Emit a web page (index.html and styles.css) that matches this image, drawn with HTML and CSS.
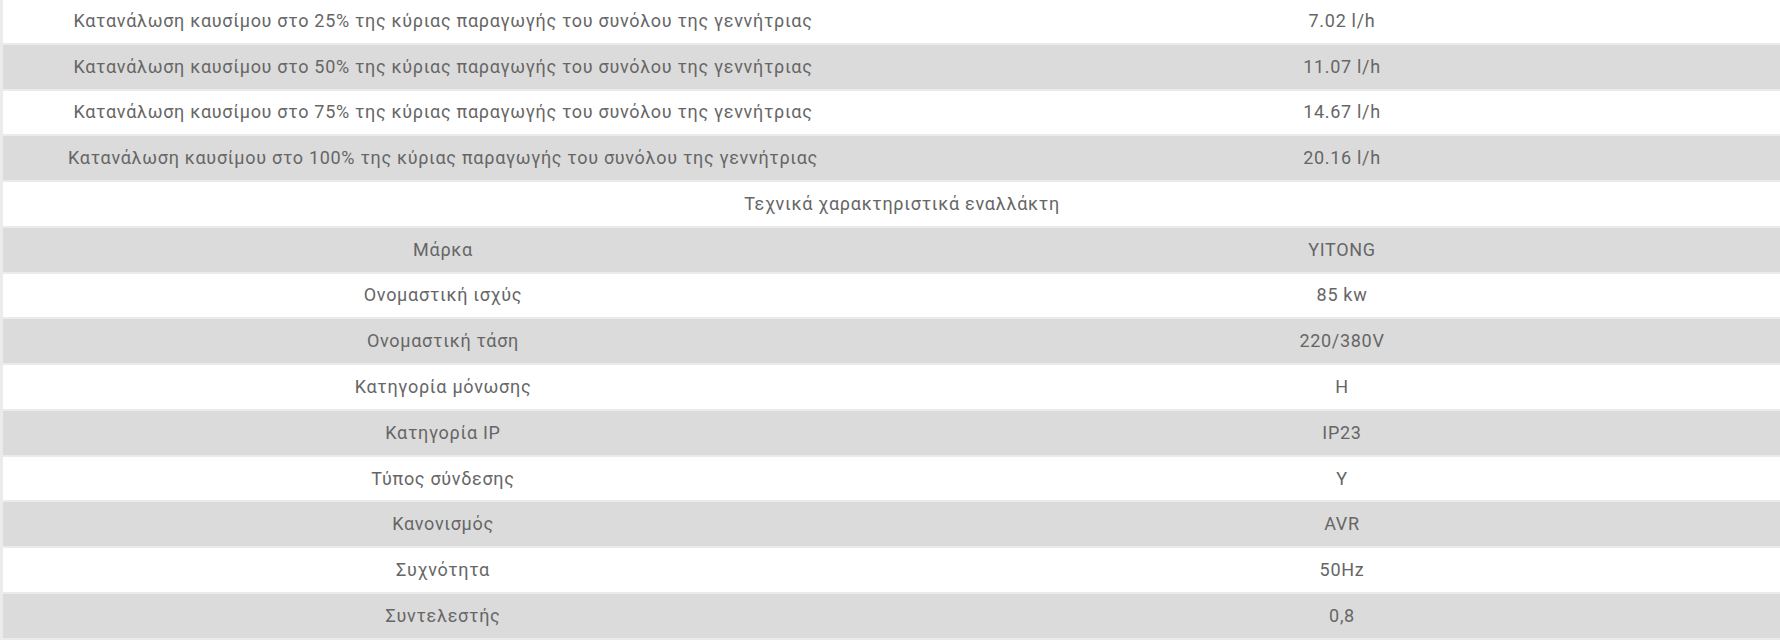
FILE: index.html
```html
<!DOCTYPE html>
<html lang="el">
<head>
<meta charset="utf-8">
<link rel="stylesheet" href="styles.css">
</head>
<body>
<div class="wrap">
  <div class="specs">
    <div class="row"><div class="cell">Κατανάλωση καυσίμου στο 25% της κύριας παραγωγής του συνόλου της γεννήτριας</div><div class="cell">7.02 l/h</div></div>
    <div class="row alt"><div class="cell">Κατανάλωση καυσίμου στο 50% της κύριας παραγωγής του συνόλου της γεννήτριας</div><div class="cell">11.07 l/h</div></div>
    <div class="row"><div class="cell">Κατανάλωση καυσίμου στο 75% της κύριας παραγωγής του συνόλου της γεννήτριας</div><div class="cell">14.67 l/h</div></div>
    <div class="row alt"><div class="cell">Κατανάλωση καυσίμου στο 100% της κύριας παραγωγής του συνόλου της γεννήτριας</div><div class="cell">20.16 l/h</div></div>
    <div class="row head"><div class="cell span">Τεχνικά χαρακτηριστικά εναλλάκτη</div></div>
    <div class="row alt"><div class="cell">Μάρκα</div><div class="cell">YITONG</div></div>
    <div class="row"><div class="cell">Ονομαστική ισχύς</div><div class="cell">85 kw</div></div>
    <div class="row alt"><div class="cell">Ονομαστική τάση</div><div class="cell">220/380V</div></div>
    <div class="row"><div class="cell">Κατηγορία μόνωσης</div><div class="cell">H</div></div>
    <div class="row alt"><div class="cell">Κατηγορία IP</div><div class="cell">IP23</div></div>
    <div class="row"><div class="cell">Τύπος σύνδεσης</div><div class="cell">Y</div></div>
    <div class="row alt"><div class="cell">Κανονισμός</div><div class="cell">AVR</div></div>
    <div class="row"><div class="cell">Συχνότητα</div><div class="cell">50Hz</div></div>
    <div class="row alt"><div class="cell">Συντελεστής</div><div class="cell">0,8</div></div>
  </div>
</div>
</body>
</html>
```

FILE: styles.css
```css
html, body {
  margin: 0;
  padding: 0;
  background: #ffffff;
  overflow: hidden;
}
.wrap {
  border-left: 3px solid #ebebeb;
  margin-top: -1px;
  width: 1810px;
}
.specs {
  display: flex;
  flex-direction: column;
  font-family: Roboto, "Noto Sans", sans-serif;
  font-size: 18px;
  letter-spacing: 0.7px;
  color: #666666;
}
.row {
  display: grid;
  grid-template-columns: 880px 918px;
  height: 43.77px;
  border-bottom: 2px solid #ebebeb;
  background: #ffffff;
}
.row.alt {
  background: #dbdbdb;
}
.cell {
  display: flex;
  align-items: center;
  justify-content: center;
  padding-bottom: 1px;
  white-space: nowrap;
}
.cell.span {
  grid-column: 1 / span 2;
}
```
